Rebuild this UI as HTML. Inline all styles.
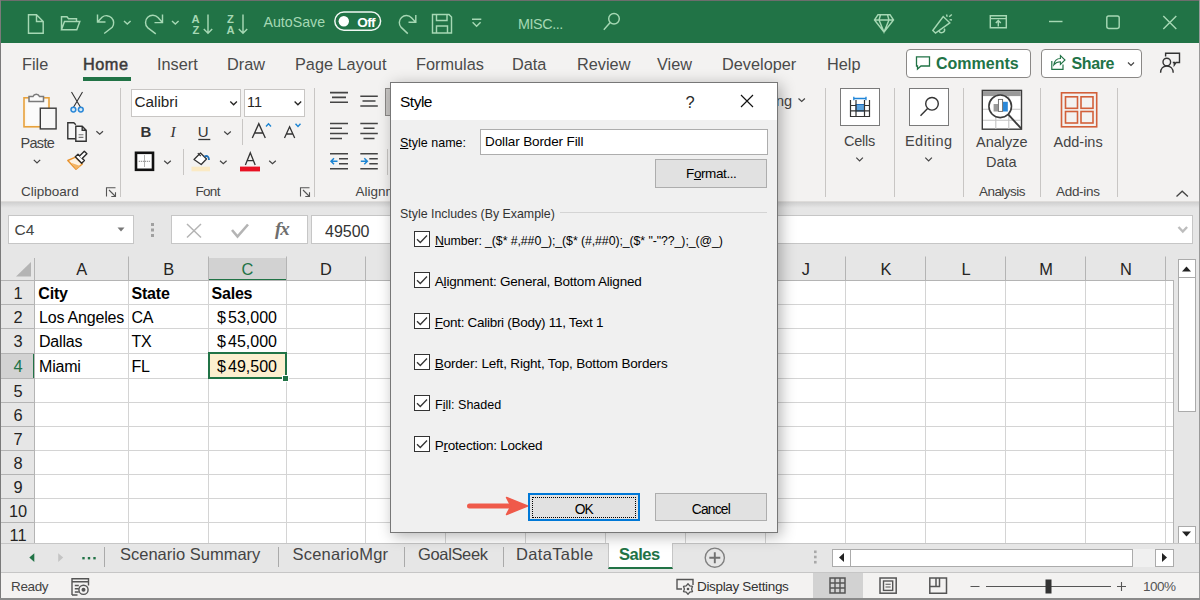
<!DOCTYPE html>
<html><head><meta charset="utf-8">
<style>
*{margin:0;padding:0;box-sizing:border-box}
html,body{width:1200px;height:600px;overflow:hidden;background:#f3f2f1;font-family:"Liberation Sans",sans-serif;color:#252423}
.a{position:absolute}
.t{position:absolute;white-space:nowrap}
svg{position:absolute;overflow:visible}
#title{left:0;top:0;width:1200px;height:43px;background:#217346;border-top:1px solid #6d6d6d}
.tab{position:absolute;top:52.7px;font-size:16.3px;color:#4a4a4a;line-height:22px}
.grp{position:absolute;top:184px;font-size:13.5px;color:#444;line-height:16px}
.sep{position:absolute;width:1px;background:#c8c6c4}
</style></head><body>
<!-- outer border -->
<div class="a" style="left:0;top:0;width:1px;height:600px;background:#7a7a7a;z-index:50"></div>
<div class="a" style="left:1199px;top:0;width:1px;height:600px;background:#9a9a9a;z-index:50"></div>
<div class="a" style="left:0;top:598px;width:1200px;height:2px;background:#8a8a8a;z-index:50"></div>

<!-- TITLE BAR -->
<div id="title" class="a"></div>
<svg class="a" style="left:0;top:0" width="1200" height="43" viewBox="0 0 1200 43">
<g fill="none" stroke="#a6d8b4" stroke-width="1.45" stroke-linejoin="miter">
<!-- new -->
<path d="M28.5 14.8 H36.5 L43.2 21.5 V33.2 H28.5 Z M36.5 14.8 V21.5 H43.2"/>
<!-- open -->
<path d="M61.5 29.8 V16.8 H67 L68.5 18.8 H76.5 V21.5 M61.5 29.8 L64.5 21.5 H79.8 L76.8 29.8 Z"/>
<!-- undo -->
<path d="M97.5 14.5 V22 H105.5 M97.8 21.8 L102 17.2 A7.2 7.2 0 0 1 112.2 27.2 L104.2 33.5"/>
<path d="M124 21 L127.3 24 L130.6 21"/>
<!-- redo -->
<path d="M162.5 14.5 V22.6 H154.5 M162.2 22.3 L158 17.5 A7.2 7.2 0 0 0 147.6 27.6 L155.8 33.8"/>
<path d="M172 21 L175.3 24 L178.6 21"/>
<!-- sort arrows -->
<path d="M208 14.5 V33.2 M203.8 29 L208 33.2 L212.2 29"/>
<path d="M243 14.5 V33.2 M238.8 29 L243 33.2 L247.2 29"/>
<!-- repeat -->
<path d="M415.8 15 V22.2 H408.5 M415.5 22 L411.5 17.8 A6.8 6.8 0 0 0 401.2 27.4 L407.8 33.6"/>
<!-- save -->
<path d="M432.5 14.5 H449 L451.5 17 V33 H432.5 Z M436.5 14.5 V20.5 H447 V14.5 M436.5 33 V26 H447.5 V33"/>
<!-- customize -->
<path d="M472 19.3 H481.3 M472.6 22.3 L476.6 26.3 L480.6 22.3"/>
<!-- search -->
<circle cx="614" cy="18.8" r="5.3"/>
<path d="M610.2 22.6 L603.8 29.8"/>
<!-- diamond -->
<path d="M878 14.7 H890 L893.5 20 L884 32 L874.5 20 Z M874.5 20 H893.5 M880.5 14.7 L879 20 L884 32 L889 20 L887.5 14.7"/>
<!-- megaphone -->
<path d="M932.8 30.5 L943.2 16.5 L949.8 22.8 L935.5 33 Z M939 31 A2.8 2.8 0 0 0 944.3 28.6 M946.5 14.5 L947.2 16.8 M949.2 16.8 L951.8 14.5 M949.6 19.6 L952 20"/>
<!-- ribbon display -->
<path d="M990.3 15.8 H1006.3 V27.8 H990.3 Z M990.3 18.6 H1006.3 M998.3 26.5 V20.5 M995.8 23 L998.3 20.5 L1000.8 23"/>
<!-- min -->
<path d="M1049 21.5 H1062.5"/>
<!-- max -->
<rect x="1106.8" y="16" width="12.4" height="12.4" rx="1.8"/>
<!-- close -->
<path d="M1163.3 16 L1176.3 29 M1176.3 16 L1163.3 29"/>
</g>
<g font-family="Liberation Sans" fill="#a6d8b4" font-size="11.2" >
<text x="191.6" y="22.6" font-weight="bold">A</text><text x="192.4" y="33.8" font-weight="bold">Z</text>
<text x="227" y="22.6" font-weight="bold">Z</text><text x="226.5" y="33.8" font-weight="bold">A</text>
</g>
<text x="263.5" y="26.9" font-family="Liberation Sans" font-size="14.2" fill="#a6d8b4">AutoSave</text>
<rect x="334.8" y="12" width="45.8" height="18.2" rx="9.1" fill="none" stroke="#f0f7f2" stroke-width="1.5"/>
<circle cx="343.8" cy="21.2" r="5.2" fill="#fff"/>
<text x="357.2" y="26.9" font-family="Liberation Sans" font-size="13.6" font-weight="bold" fill="#fff" letter-spacing="-0.6">Off</text>
<text x="518" y="29.2" font-family="Liberation Sans" font-size="14.3" fill="#a6d8b4" letter-spacing="-0.4">MISC...</text>
</svg>


<!-- TABS -->
<div class="tab" style="left:22px">File</div>
<div class="tab" style="left:83px;color:#3b3a39;-webkit-text-stroke:0.5px #3b3a39;letter-spacing:0.5px">Home</div>
<div class="a" style="left:83px;top:77px;width:48px;height:4px;background:#217346"></div>
<div class="tab" style="left:157px">Insert</div>
<div class="tab" style="left:227px">Draw</div>
<div class="tab" style="left:295px">Page Layout</div>
<div class="tab" style="left:416px">Formulas</div>
<div class="tab" style="left:512px">Data</div>
<div class="tab" style="left:577px">Review</div>
<div class="tab" style="left:657px">View</div>
<div class="tab" style="left:722px">Developer</div>
<div class="tab" style="left:827px">Help</div>


<!-- tabs right -->
<div class="a" style="left:906px;top:48.5px;width:125px;height:29px;border:1px solid #8a8886;border-radius:4px;background:#fff"></div>
<div class="t" style="left:936px;top:52.7px;font-size:16px;font-weight:bold;color:#217346;line-height:22px">Comments</div>
<div class="a" style="left:1041px;top:48.5px;width:101px;height:29px;border:1px solid #8a8886;border-radius:4px;background:#fff"></div>
<div class="t" style="left:1071.5px;top:52.7px;font-size:16px;font-weight:bold;color:#217346;line-height:22px;letter-spacing:-0.4px">Share</div>
<svg class="a" style="left:0;top:0" width="1200" height="210" viewBox="0 0 1200 210">
<g fill="none" stroke="#217346" stroke-width="1.3">
<path d="M916.5 56.8 H929.5 V66 H921 L917.5 69 V66 H916.5 Z"/>
<path d="M1051.8 61 V69.3 H1063 V64.4" stroke-width="1.2"/><path d="M1053.8 64.8 C1054.5 60.5 1057 58.5 1060.4 58.5 V55.6 L1065 60 L1060.4 64.5 V61.8 C1057.5 61.8 1055.5 62.8 1053.8 64.8 Z" stroke-width="1.1"/>
</g>
<path d="M1128 62.5 L1131 65.5 L1134 62.5" fill="none" stroke="#444" stroke-width="1.2"/>
<g fill="none" stroke="#333" stroke-width="1.4">
<circle cx="1166.8" cy="62" r="3.8"/>
<path d="M1160.6 72.8 C1160.6 68.5 1163.3 66 1166.8 66 C1170.3 66 1173.2 68.5 1173.2 72.8"/>
<path d="M1165.6 56.5 V53.3 H1179.5 V62.5 H1176 L1174.3 65 V62.5 H1172.8"/>
</g>
</svg>

<!-- RIBBON -->
<!-- separators -->
<div class="sep" style="left:120px;top:88px;height:109px"></div>
<div class="sep" style="left:314px;top:88px;height:109px"></div>
<div class="sep" style="left:825px;top:88px;height:109px"></div>
<div class="sep" style="left:894px;top:88px;height:109px"></div>
<div class="sep" style="left:963px;top:88px;height:109px"></div>
<div class="sep" style="left:1040px;top:88px;height:109px"></div>
<div class="sep" style="left:1117px;top:88px;height:109px"></div>
<div class="sep" style="left:242px;top:119px;height:26px"></div>
<div class="sep" style="left:183px;top:149px;height:26px"></div>
<div class="sep" style="left:387px;top:149px;height:26px"></div>
<!-- inputs -->
<div class="a" style="left:131px;top:88.5px;width:110px;height:28px;background:#fff;border:1px solid #c8c6c4"></div>
<div class="a" style="left:243.5px;top:88.5px;width:61px;height:28px;background:#fff;border:1px solid #c8c6c4"></div>
<div class="t" style="left:134.5px;top:93px;font-size:15.3px;line-height:18px;color:#252423">Calibri</div>
<div class="t" style="left:247px;top:93px;font-size:14.5px;line-height:18px;color:#252423">11</div>
<!-- cells / editing boxes -->
<div class="a" style="left:840px;top:88px;width:40px;height:38px;background:#fff;border:1px solid #7a7a7a"></div>
<div class="a" style="left:909px;top:88px;width:40px;height:38px;background:#fff;border:1px solid #7a7a7a"></div>
<div class="a" style="left:385px;top:88px;width:10px;height:28px;background:#c8c6c4;border:1px solid #8a8886"></div>
<!-- labels -->
<div class="t" style="left:20.5px;top:134px;font-size:14.5px;line-height:18px;color:#444;letter-spacing:-0.7px">Paste</div>
<div class="grp" style="left:21px">Clipboard</div>
<div class="grp" style="left:195.5px;letter-spacing:-0.7px">Font</div>
<div class="grp" style="left:355.5px">Alignm</div>
<div class="grp" style="left:979px;letter-spacing:-0.55px">Analysis</div>
<div class="grp" style="left:1056px;letter-spacing:-0.3px">Add-ins</div>
<div class="t" style="left:844px;top:132px;font-size:14.5px;line-height:18px;color:#444;letter-spacing:-0.25px">Cells</div>
<div class="t" style="left:905px;top:132px;font-size:14.5px;line-height:18px;color:#444;letter-spacing:0.45px">Editing</div>
<div class="t" style="left:976px;top:133px;font-size:14.5px;line-height:18px;color:#444">Analyze</div>
<div class="t" style="left:986px;top:152.5px;font-size:14.5px;line-height:18px;color:#444">Data</div>
<div class="t" style="left:1053.5px;top:133px;font-size:14.5px;line-height:18px;color:#444">Add-ins</div>
<div class="t" style="left:776px;top:92px;font-size:14.5px;line-height:18px;color:#444">ng</div>

<svg class="a" style="left:0;top:0" width="1200" height="210" viewBox="0 0 1200 210">
<!-- paste -->
<rect x="24" y="97.8" width="25" height="29" fill="#fdf6ea" stroke="#e8a23c" stroke-width="1.6"/>
<rect x="26.5" y="100.5" width="20" height="24" fill="#fbfbfb" stroke="none"/>
<path d="M29 101.5 V96.5 H33 A3.5 3.5 0 0 1 39.5 96.5 H43.5 V101.5 Z" fill="#fafafa" stroke="#7a7a7a" stroke-width="1.5"/>
<rect x="40.3" y="108.2" width="15.8" height="20.7" fill="#f7f7f7" stroke="#3b3b3b" stroke-width="1.4"/>
<g fill="none" stroke="#444" stroke-width="1.2">
<path d="M33.8 159.8 L37 163 L40.2 159.8"/>
<path d="M96.4 131.2 L99.7 134.2 L103 131.2"/>
<path d="M224.2 131.5 L227.5 134.5 L230.8 131.5"/>
<path d="M164.2 160.8 L167.5 163.8 L170.8 160.8"/>
<path d="M220 160.8 L223.3 163.8 L226.6 160.8"/>
<path d="M269.2 160.8 L272.5 163.8 L275.8 160.8"/>
<path d="M230.3 101.5 L233.6 104.8 L236.9 101.5" stroke="#252423" stroke-width="1.3"/>
<path d="M294.6 101.5 L297.9 104.8 L301.2 101.5" stroke="#252423" stroke-width="1.3"/>
<path d="M856.3 157.6 L859.6 160.9 L862.9 157.6"/>
<path d="M925.3 157.6 L928.6 160.9 L931.9 157.6"/>
<path d="M798.5 98.5 L801.7 101.5 L804.9 98.5"/>
<path d="M1176.5 196.5 L1182.2 191.2 L1187.9 196.5" stroke-width="1.3"/>
</g>
<!-- scissors -->
<g fill="none" stroke="#333" stroke-width="1.1">
<path d="M71.5 92 L80.5 107.3 M82.5 92 L73.5 107.3"/>
</g>
<circle cx="73.4" cy="109.6" r="2.4" fill="#d6ebf8" stroke="#2b88d8" stroke-width="1.5"/>
<circle cx="80.8" cy="109.6" r="2.4" fill="#d6ebf8" stroke="#2b88d8" stroke-width="1.5"/>
<!-- copy -->
<path d="M75.5 138.8 H67.8 V122.8 H73.8 L75.8 124.8" fill="#f6f6f6" stroke="#333" stroke-width="1.4"/>
<path d="M75.8 141.2 V126.2 H82.2 L86.2 130.2 V141.2 Z M82.2 126.2 V130.2 H86.2" fill="#f6f6f6" stroke="#333" stroke-width="1.4"/>
<path d="M78.6 134.8 H83.4 M78.6 137.4 H83.4" stroke="#777" stroke-width="1.1"/>
<!-- format painter -->
<path d="M67.8 160.5 L75.5 157.2 L82.3 164 L76 169.3 Z" fill="#fdf3e4" stroke="#e8912a" stroke-width="1.4" stroke-linejoin="round"/>
<path d="M71 162.8 L80.3 166 L76 169.3 Z" fill="#f3b565"/>
<path d="M75.3 156.8 L78 154.2 L84.4 160.6 L81.7 163.2 Z" fill="#fff" stroke="#2b2b2b" stroke-width="1.4" stroke-linejoin="round"/>
<path d="M79.3 156.2 L84.3 151.2 L86.9 153.8 L81.9 158.8" fill="#fff" stroke="#2b2b2b" stroke-width="1.4" stroke-linejoin="round"/>
<!-- launchers -->
<g fill="none" stroke="#555" stroke-width="1.1">
<path d="M106.5 196.5 V187.8 H115.5 M109 190 L115.5 196.5 M111.3 196.5 H115.5 V192.3"/>
<path d="M300.5 196.5 V187.8 H309.5 M303 190 L309.5 196.5 M305.3 196.5 H309.5 V192.3"/>
</g>
<!-- B I U -->
<text x="140.5" y="136.5" font-family="Liberation Sans" font-weight="bold" font-size="15" fill="#333">B</text>
<text x="170.5" y="136.5" font-family="Liberation Serif" font-style="italic" font-size="15.5" fill="#333">I</text>
<text x="197.8" y="136.5" font-family="Liberation Sans" font-size="15" fill="#333">U</text>
<path d="M198.3 139.5 H210.3" stroke="#333" stroke-width="1.3"/>
<path d="M252.3 138 L258.8 123.6 L265.3 138 M254.6 133 H263" fill="none" stroke="#333" stroke-width="1.35"/>
<path d="M266 126.5 L268.5 123.8 L271 126.5" fill="none" stroke="#1d85d3" stroke-width="1.4"/>
<path d="M284.5 138 L289.6 126.8 L294.7 138 M286.4 134 H292.8" fill="none" stroke="#333" stroke-width="1.3"/>
<path d="M295.5 123.8 L298 126.5 L300.5 123.8" fill="none" stroke="#1d85d3" stroke-width="1.4"/>
<!-- borders -->
<rect x="136" y="152.8" width="17" height="17" fill="#fff" stroke="#111" stroke-width="2.6"/>
<path d="M144.5 155.5 V167.5 M138.8 161.3 H150.2" stroke="#666" stroke-width="1" stroke-dasharray="1 1"/>
<!-- fill -->
<rect x="191.5" y="166.7" width="18.5" height="4.6" fill="#fbeac4"/>
<path d="M194 159.5 L200.5 153 L206.5 159 L201.2 164.5 Z" fill="#fff" stroke="#333" stroke-width="1.3" stroke-linejoin="round"/>
<path d="M197.8 153.2 L200.8 156.2" stroke="#333" stroke-width="1.2"/>
<path d="M204.5 156.5 C207.5 155 209 157 209 160" fill="none" stroke="#1d6fb8" stroke-width="1.8"/>
<!-- font color -->
<path d="M245.4 165 L250.3 152.8 L255.2 165 M247.2 160.6 H253.4" fill="none" stroke="#333" stroke-width="1.3"/>
<rect x="240" y="166.6" width="20" height="4.8" fill="#e81123"/>
<!-- alignment icons -->
<g stroke="#444" stroke-width="1.6">
<path d="M330 92.6 H348 M332 97.4 H346 M330 102.3 H348"/>
<path d="M360.3 96.3 H377.8 M362.5 101 H375.5 M360.3 106 H377.8"/>
<path d="M330 123.5 H348 M330 128.2 H342 M330 133.5 H348 M330 138.5 H342"/>
<path d="M360.3 123.5 H377.8 M363.5 128.2 H374.5 M360.3 133.5 H377.8 M363.5 138.5 H374.5"/>
<path d="M330 153.8 H348 M339 158.8 H348 M339 163.8 H348 M330 168.8 H348"/>
<path d="M360.3 153.8 H377.8 M369.3 158.8 H377.8 M369.3 163.8 H377.8 M360.3 168.8 H377.8"/>
</g>
<g stroke="#1d85d3" stroke-width="1.5" fill="none">
<path d="M331 161.3 H337.5 M334 158.3 L331 161.3 L334 164.3"/>
<path d="M360.8 161.3 H367.3 M364.3 158.3 L367.3 161.3 L364.3 164.3"/>
</g>
<!-- cells icon -->
<rect x="856" y="104.5" width="8.5" height="6.5" fill="#5ba3e0" stroke="#1f6fc0" stroke-width="1"/>
<path d="M850.5 100 V116.5 H869.5 V100 M850.5 105.5 H856 M864.5 105.5 H869.5 M850.5 110.8 H856 M864.5 110.8 H869.5 M856 100 V116.5 M864.5 100 V116.5 M856 110.8 H864.5" fill="none" stroke="#333" stroke-width="1.2"/>
<path d="M853.5 98.5 H866.2 M853.8 96.8 V100.2 M866 96.8 V100.2" stroke="#1f85d8" stroke-width="1.3"/>
<!-- editing search -->
<circle cx="932" cy="103.8" r="6.3" fill="none" stroke="#333" stroke-width="1.4"/>
<path d="M927.6 108.4 L920.5 115.8" stroke="#333" stroke-width="1.4"/>
<!-- analyze data -->
<rect x="982.3" y="90.4" width="39.2" height="38.8" fill="#fff" stroke="#3b3b3b" stroke-width="1.4"/>
<rect x="983" y="91.1" width="37.8" height="5" fill="#9a9a9a"/>
<path d="M983 109.2 H1021 M983 120.2 H1021 M995.8 96 V129 M1008.8 96 V129" stroke="#c4c4c4" stroke-width="1.1"/>
<circle cx="1000.2" cy="106.3" r="11.3" fill="#fff" stroke="#3b3b3b" stroke-width="1.6"/>
<path d="M1008.2 114.3 L1021.3 128.7" stroke="#3b3b3b" stroke-width="1.9"/>
<rect x="993.6" y="104" width="4.4" height="7.5" fill="#9a9a9a"/>
<rect x="998.4" y="99.4" width="4.2" height="12" fill="#fff" stroke="#666" stroke-width="0.9"/>
<rect x="1003" y="101.8" width="4.8" height="9.7" fill="#2b88d8"/>
<!-- add-ins -->
<g fill="none" stroke="#d2603a" stroke-width="1.6">
<rect x="1061.5" y="92.8" width="35.2" height="34"/>
<rect x="1065.5" y="96.8" width="12" height="11.5"/>
<rect x="1081" y="96.8" width="12" height="11.5"/>
<rect x="1065.5" y="111.5" width="12" height="11.5"/>
<rect x="1081" y="111.5" width="12" height="11.5"/>
</g>
</svg>

<div class="a" style="left:0;top:201px;width:1200px;height:2px;background:#dedcda"></div>

<!-- FORMULA AREA -->
<div class="a" style="left:0;top:202px;width:1200px;height:341px;background:#e6e6e6"></div>
<div class="a" style="left:0;top:202px;width:1200px;height:6px;background:linear-gradient(#cfcfcf,#e6e6e6)"></div>
<div class="a" style="left:7.5px;top:214.8px;width:126px;height:29.7px;background:#fff;border:1px solid #c6c6c6"></div>
<div class="t" style="left:14.5px;top:220.5px;font-size:15.5px;line-height:18px;color:#444">C4</div>

<div class="a" style="left:171.3px;top:215.3px;width:136.5px;height:29px;background:#fff;border:1px solid #c6c6c6"></div>
<div class="t" style="left:275px;top:218px;font-size:19px;line-height:22px;color:#6e6e6e;font-family:'Liberation Serif';font-style:italic;font-weight:bold;letter-spacing:-1px">fx</div>
<div class="a" style="left:311px;top:215.3px;width:882px;height:29px;background:#fff;border:1px solid #c6c6c6"></div>
<div class="t" style="left:325px;top:222.5px;font-size:16px;line-height:18px;color:#333">49500</div>
<svg class="a" style="left:0;top:200px" width="1200" height="60" viewBox="0 200 1200 60">
<path d="M117.5 227.5 H124.5 L121 231.5 Z" fill="#777"/>
<g fill="#a0a0a0"><rect x="151" y="223" width="3" height="3"/><rect x="151" y="228.5" width="3" height="3"/><rect x="151" y="234" width="3" height="3"/></g>
<path d="M187 224 L201 237.5 M201 224 L187 237.5" stroke="#b4b4b4" stroke-width="1.5"/>
<path d="M232 230 L237.5 236.5 L248 224.5" fill="none" stroke="#b4b4b4" stroke-width="2.6"/>
<path d="M1178.5 227 L1182.8 231.5 L1187.1 227" fill="none" stroke="#bdbdbd" stroke-width="2.4"/>
</svg>

<!-- GRID -->
<div class="a" style="left:1px;top:257.5px;width:1172px;height:22.5px;background:#e6e6e6"></div>
<div class="a" style="left:208px;top:257.5px;width:78.5px;height:23px;background:#d2d2d2;border-bottom:2px solid #217346"></div>
<div class="a" style="left:1px;top:280px;width:33px;height:263px;background:#e6e6e6"></div>
<div class="a" style="left:1px;top:353px;width:34px;height:25px;background:#d2d2d2;border-right:2px solid #217346"></div>
<div class="a" style="left:35px;top:280.5px;width:1138.5px;height:263px;background:#fff"></div>
<svg class="a" style="left:0;top:0" width="1200" height="600" viewBox="0 0 1200 600">
<path d="M16 276.5 H31 V262 Z" fill="#b4b4b4"/>
<g stroke="#d4d4d4" stroke-width="1">
<path d="M35 304.5 H1173.5"/>
<path d="M35 328.5 H1173.5"/>
<path d="M35 353.5 H1173.5"/>
<path d="M35 378.5 H1173.5"/>
<path d="M35 402.5 H1173.5"/>
<path d="M35 426.5 H1173.5"/>
<path d="M35 450.5 H1173.5"/>
<path d="M35 474.5 H1173.5"/>
<path d="M35 498.5 H1173.5"/>
<path d="M35 522.5 H1173.5"/>
<path d="M128.5 280 V543"/>
<path d="M208.5 280 V543"/>
<path d="M286.5 280 V543"/>
<path d="M365.5 280 V543"/>
<path d="M445.5 280 V543"/>
<path d="M525.5 280 V543"/>
<path d="M605.5 280 V543"/>
<path d="M685.5 280 V543"/>
<path d="M765.5 280 V543"/>
<path d="M845.5 280 V543"/>
<path d="M925.5 280 V543"/>
<path d="M1005.5 280 V543"/>
<path d="M1085.5 280 V543"/>
<path d="M1165.5 280 V543"/>
</g>
<g stroke="#b4b4b4" stroke-width="1">
<path d="M1 280.5 H1173.5"/>
<path d="M34.5 258 V543"/>
<path d="M128.5 256.5 V280"/>
<path d="M208.5 256.5 V280"/>
<path d="M286.5 256.5 V280"/>
<path d="M365.5 256.5 V280"/>
<path d="M445.5 256.5 V280"/>
<path d="M525.5 256.5 V280"/>
<path d="M605.5 256.5 V280"/>
<path d="M685.5 256.5 V280"/>
<path d="M765.5 256.5 V280"/>
<path d="M845.5 256.5 V280"/>
<path d="M925.5 256.5 V280"/>
<path d="M1005.5 256.5 V280"/>
<path d="M1085.5 256.5 V280"/>
<path d="M1165.5 256.5 V280"/>
<path d="M1 304.5 H34"/>
<path d="M1 328.5 H34"/>
<path d="M1 353.5 H34"/>
<path d="M1 378.5 H34"/>
<path d="M1 402.5 H34"/>
<path d="M1 426.5 H34"/>
<path d="M1 450.5 H34"/>
<path d="M1 474.5 H34"/>
<path d="M1 498.5 H34"/>
<path d="M1 522.5 H34"/>
<path d="M1173.5 280 V543"/>
</g>
</svg>
<div class="t" style="left:34.5px;width:94.5px;text-align:center;top:259px;font-size:16.4px;line-height:20px;color:#252423">A</div>
<div class="t" style="left:129.0px;width:79.5px;text-align:center;top:259px;font-size:16.4px;line-height:20px;color:#252423">B</div>
<div class="t" style="left:208.5px;width:78px;text-align:center;top:259px;font-size:16.4px;line-height:20px;color:#217346">C</div>
<div class="t" style="left:286.5px;width:79px;text-align:center;top:259px;font-size:16.4px;line-height:20px;color:#252423">D</div>
<div class="t" style="left:765.5px;width:80.5px;text-align:center;top:259px;font-size:16.4px;line-height:20px;color:#252423">J</div>
<div class="t" style="left:846.0px;width:79.79999999999995px;text-align:center;top:259px;font-size:16.4px;line-height:20px;color:#252423">K</div>
<div class="t" style="left:925.8px;width:80.5px;text-align:center;top:259px;font-size:16.4px;line-height:20px;color:#252423">L</div>
<div class="t" style="left:1006.3px;width:79.79999999999995px;text-align:center;top:259px;font-size:16.4px;line-height:20px;color:#252423">M</div>
<div class="t" style="left:1086.1px;width:79.90000000000009px;text-align:center;top:259px;font-size:16.4px;line-height:20px;color:#252423">N</div>
<div class="t" style="left:1px;width:34px;text-align:center;top:283px;font-size:16.4px;line-height:20px;color:#252423">1</div>
<div class="t" style="left:1px;width:34px;text-align:center;top:307px;font-size:16.4px;line-height:20px;color:#252423">2</div>
<div class="t" style="left:1px;width:34px;text-align:center;top:331px;font-size:16.4px;line-height:20px;color:#252423">3</div>
<div class="t" style="left:1px;width:34px;text-align:center;top:356px;font-size:16.4px;line-height:20px;color:#217346">4</div>
<div class="t" style="left:1px;width:34px;text-align:center;top:381px;font-size:16.4px;line-height:20px;color:#252423">5</div>
<div class="t" style="left:1px;width:34px;text-align:center;top:405px;font-size:16.4px;line-height:20px;color:#252423">6</div>
<div class="t" style="left:1px;width:34px;text-align:center;top:429px;font-size:16.4px;line-height:20px;color:#252423">7</div>
<div class="t" style="left:1px;width:34px;text-align:center;top:453px;font-size:16.4px;line-height:20px;color:#252423">8</div>
<div class="t" style="left:1px;width:34px;text-align:center;top:477px;font-size:16.4px;line-height:20px;color:#252423">9</div>
<div class="t" style="left:1px;width:34px;text-align:center;top:501px;font-size:16.4px;line-height:20px;color:#252423">10</div>
<div class="t" style="left:1px;width:34px;text-align:center;top:525px;font-size:16.4px;line-height:20px;color:#252423">11</div>
<div class="t" style="left:38.3px;top:284.3px;font-size:16px;line-height:20px;font-weight:bold;color:#000;letter-spacing:-0.2px">City</div>
<div class="t" style="left:131.5px;top:284.3px;font-size:16px;line-height:20px;font-weight:bold;color:#000;letter-spacing:-0.2px">State</div>
<div class="t" style="left:211.5px;top:284.3px;font-size:16px;line-height:20px;font-weight:bold;color:#000;letter-spacing:-0.2px">Sales</div>
<div class="t" style="left:39px;top:308.3px;font-size:16px;line-height:20px;font-weight:normal;color:#000;letter-spacing:-0.2px">Los Angeles</div>
<div class="t" style="left:131.5px;top:308.3px;font-size:16px;line-height:20px;font-weight:normal;color:#000;letter-spacing:-0.2px">CA</div>
<div class="t" style="left:39px;top:332.3px;font-size:16px;line-height:20px;font-weight:normal;color:#000;letter-spacing:-0.2px">Dallas</div>
<div class="t" style="left:131.5px;top:332.3px;font-size:16px;line-height:20px;font-weight:normal;color:#000;letter-spacing:-0.2px">TX</div>
<div class="t" style="left:39px;top:357.3px;font-size:16px;line-height:20px;font-weight:normal;color:#000;letter-spacing:-0.2px">Miami</div>
<div class="t" style="left:131.5px;top:357.3px;font-size:16px;line-height:20px;font-weight:normal;color:#000;letter-spacing:-0.2px">FL</div>
<div class="a" style="left:207.5px;top:352.3px;width:79px;height:26.7px;background:#fcefcf;border:2.3px solid #217346"></div>
<div class="a" style="left:282px;top:375px;width:7px;height:7px;background:#217346;border:1px solid #fff"></div>
<div class="t" style="left:217px;top:308.3px;font-size:16px;line-height:20px;color:#000">$</div>
<div class="t" style="left:200px;width:77px;text-align:right;top:308.3px;font-size:16px;line-height:20px;color:#000">53,000</div>
<div class="t" style="left:217px;top:332.3px;font-size:16px;line-height:20px;color:#000">$</div>
<div class="t" style="left:200px;width:77px;text-align:right;top:332.3px;font-size:16px;line-height:20px;color:#000">45,000</div>
<div class="t" style="left:217px;top:357.3px;font-size:16px;line-height:20px;color:#000">$</div>
<div class="t" style="left:200px;width:77px;text-align:right;top:357.3px;font-size:16px;line-height:20px;color:#000">49,500</div>
<!-- v scrollbar -->
<div class="a" style="left:1174px;top:257px;width:25px;height:286px;background:#e6e6e6"></div>
<div class="a" style="left:1177.5px;top:259px;width:18px;height:152.5px;background:#fff;border:1px solid #ababab"></div>
<div class="a" style="left:1177.5px;top:259px;width:18px;height:18.5px;background:#fff;border:1px solid #ababab"></div>
<div class="a" style="left:1177.5px;top:525.5px;width:18px;height:18px;background:#fff;border:1px solid #ababab"></div>
<svg class="a" style="left:0;top:0" width="1200" height="600" viewBox="0 0 1200 600">
<path d="M1182 271.5 H1191 L1186.5 266.5 Z" fill="#222"/>
<path d="M1182 531.5 H1191 L1186.5 536.5 Z" fill="#222"/>
</svg>

<!-- SHEET TABS -->
<div class="a" style="left:0;top:543px;width:1200px;height:29px;background:#e6e6e6;border-top:1px solid #c6c6c6"></div>
<div class="a" style="left:608px;top:543px;width:64.5px;height:26px;background:#fff;border-left:1px solid #c6c6c6;border-right:1px solid #c6c6c6;border-bottom:2px solid #217346"></div>
<svg class="a" style="left:0;top:0" width="1200" height="600" viewBox="0 0 1200 600">
<path d="M34.3 553.2 V562 L29.3 557.6 Z" fill="#217346"/>
<path d="M58.2 553.2 V562 L63.2 557.6 Z" fill="#c4c4c4"/>
<g fill="#217346"><rect x="82.3" y="557" width="2.4" height="2.4"/><rect x="87.8" y="557" width="2.4" height="2.4"/><rect x="93.3" y="557" width="2.4" height="2.4"/></g>
<g stroke="#aaa" stroke-width="1"><path d="M104.5 547 V567 M278.5 547 V567 M404.5 547 V567 M503.5 547 V567"/></g>
<circle cx="714.8" cy="557.7" r="9.6" fill="none" stroke="#808080" stroke-width="1.4"/>
<path d="M714.8 552.2 V563.2 M709.3 557.7 H720.3" stroke="#707070" stroke-width="1.9"/>
<g fill="#a8a8a8"><rect x="814" y="550.5" width="2.6" height="2.6"/><rect x="814" y="555.7" width="2.6" height="2.6"/><rect x="814" y="560.9" width="2.6" height="2.6"/></g>
</svg>
<div class="t" style="left:120px;top:543px;font-size:16.5px;line-height:22px;color:#444">Scenario Summary</div>
<div class="t" style="left:292.5px;top:543px;font-size:16.5px;line-height:22px;color:#444;letter-spacing:0.2px">ScenarioMgr</div>
<div class="t" style="left:418px;top:543px;font-size:16.5px;line-height:22px;color:#444;letter-spacing:-0.35px">GoalSeek</div>
<div class="t" style="left:516px;top:543px;font-size:16.5px;line-height:22px;color:#444;letter-spacing:0.35px">DataTable</div>
<div class="t" style="left:619px;top:543px;font-size:16.5px;line-height:22px;color:#217346;font-weight:bold;letter-spacing:-0.5px">Sales</div>
<!-- h scrollbar -->
<div class="a" style="left:832px;top:548.5px;width:342px;height:18px;background:#f0f0f0"></div>
<div class="a" style="left:832px;top:548.5px;width:301px;height:18px;background:#fff;border:1px solid #ababab"></div>
<div class="a" style="left:832px;top:548.5px;width:18.5px;height:18px;background:#fff;border:1px solid #ababab"></div>
<div class="a" style="left:1155px;top:548.5px;width:18.5px;height:18px;background:#fff;border:1px solid #ababab"></div>
<svg class="a" style="left:0;top:0" width="1200" height="600" viewBox="0 0 1200 600">
<path d="M844 553 V562 L839 557.5 Z" fill="#222"/>
<path d="M1162 553 V562 L1167 557.5 Z" fill="#222"/>
</svg>

<!-- STATUS -->
<div class="a" style="left:0;top:571.5px;width:1200px;height:1px;background:#c6c6c6"></div>
<div class="a" style="left:813px;top:572.5px;width:50px;height:26px;background:#d2d2d2"></div>
<div class="t" style="left:11px;top:578px;font-size:13.5px;line-height:18px;color:#444;letter-spacing:-0.35px">Ready</div>
<div class="t" style="left:697px;top:578px;font-size:13.5px;line-height:18px;color:#333;letter-spacing:-0.33px">Display Settings</div>
<div class="t" style="left:1143px;top:578px;font-size:13.5px;line-height:18px;color:#555;letter-spacing:-0.5px">100%</div>
<svg class="a" style="left:0;top:0" width="1200" height="600" viewBox="0 0 1200 600">
<g fill="none" stroke="#555" stroke-width="1.4">
<path d="M72 595 V578.8 H88.5 V585.5 M72 581.8 H88.5 M74.8 585.5 H78.8 M74.8 588.8 H78.8 M74.8 592 H78.8 M72 595 H77.5"/>
</g>
<circle cx="83.5" cy="589.8" r="4.6" fill="#f3f2f1" stroke="#555" stroke-width="1.4"/>
<circle cx="83.5" cy="589.8" r="2" fill="#555"/>
<g fill="none" stroke="#555" stroke-width="1.4">
<path d="M682 589 H677 V579.5 H693 V585"/>
<path d="M688.00 583.80 L689.80 585.88 L692.50 586.40 L691.60 589.00 L692.50 591.60 L689.80 592.12 L688.00 594.20 L686.20 592.12 L683.50 591.60 L684.40 589.00 L683.50 586.40 L686.20 585.88 Z" stroke-linejoin="round" stroke-width="1.3"/>
</g>
<circle cx="688" cy="589" r="1.3" fill="#555"/>
<g fill="none" stroke="#555" stroke-width="1.3">
<rect x="830" y="578" width="15" height="15" stroke-width="1.5"/>
<path d="M835 578 V593 M840 578 V593 M830 583 H845 M830 588 H845" stroke-width="1.4"/>
<rect x="880" y="578" width="16.2" height="15.2" stroke-width="1.5"/>
<rect x="883.5" y="581" width="9.2" height="9.4" stroke-width="1.4"/>
<path d="M885.5 584.3 H890.7 M885.5 587 H890.7" stroke-width="1.1"/>
<path d="M929.8 593.2 V578 H946.5 V593.2 Z M930 586.5 H939.5 V578 M936 578 V586.5" stroke-width="1.5"/>
</g>
<path d="M970.5 586.5 H979.5 M986 586.5 H1111 M1117 586.5 H1126 M1121.5 582 V591" stroke="#555" stroke-width="1.1"/>
<rect x="1045.5" y="579.5" width="6" height="14" fill="#333"/>
</svg>

<!-- DIALOG -->
<div class="a" style="left:390px;top:82px;width:388px;height:451px;background:#f0f0f0;border:1px solid #777;box-shadow:3px 3px 14px rgba(0,0,0,0.3)"></div>
<div class="a" style="left:391px;top:83px;width:386px;height:37px;background:#fff"></div>
<div class="t" style="left:400px;top:92px;font-size:15.5px;line-height:20px;color:#000;letter-spacing:-0.5px">Style</div>
<div class="t" style="left:685.5px;top:91.5px;font-size:16.5px;line-height:20px;color:#2a2a2a">?</div>
<svg class="a" style="left:0;top:0" width="1200" height="600" viewBox="0 0 1200 600">
<path d="M741 95 L753 107 M753 95 L741 107" stroke="#111" stroke-width="1.15"/>
<path d="M560 212.5 H767" stroke="#d4d4d4" stroke-width="1"/>
</svg>
<div class="t" style="left:400px;top:134px;font-size:13.5px;line-height:18px;color:#000;letter-spacing:0px;transform:scaleX(0.925);transform-origin:0 0"><u>S</u>tyle name:</div>
<div class="a" style="left:480px;top:129px;width:287.5px;height:25.5px;background:#fff;border:1px solid #adadad"></div>
<div class="t" style="left:485px;top:133px;font-size:13.5px;line-height:18px;color:#000;letter-spacing:-0.12px">Dollar Border Fill</div>
<div class="a" style="left:655px;top:159px;width:112px;height:28.5px;background:#e1e1e1;border:1px solid #adadad"></div>
<div class="t" style="left:655.5px;width:111.5px;text-align:center;top:165px;font-size:13.5px;line-height:18px;color:#000;letter-spacing:-0.4px">F<u>o</u>rmat...</div>
<div class="t" style="left:400px;top:205px;font-size:13.5px;line-height:18px;color:#333;letter-spacing:0px;transform:scaleX(0.917);transform-origin:0 0">Style Includes (By Example)</div>
<div class="a" style="left:414px;top:231px;width:16px;height:16px;background:#fff;border:1px solid #333"></div>
<svg class="a" style="left:414px;top:231px" width="16" height="16" viewBox="0 0 16 16"><path d="M3 8.2 L6.3 11.5 L13 4.5" fill="none" stroke="#333" stroke-width="1.3"/></svg>
<div class="t" style="left:434.8px;top:231.5px;font-size:13.5px;line-height:18px;color:#000;letter-spacing:-0.1px;transform:scaleX(0.915);transform-origin:0 0"><u>N</u>umber: _($* #,##0_);_($* (#,##0);_($* "-"??_);_(@_)</div>
<div class="a" style="left:414px;top:272px;width:16px;height:16px;background:#fff;border:1px solid #333"></div>
<svg class="a" style="left:414px;top:272px" width="16" height="16" viewBox="0 0 16 16"><path d="M3 8.2 L6.3 11.5 L13 4.5" fill="none" stroke="#333" stroke-width="1.3"/></svg>
<div class="t" style="left:434.8px;top:272.5px;font-size:13.5px;line-height:18px;color:#000;letter-spacing:-0.21px">A<u>l</u>ignment: General, Bottom Aligned</div>
<div class="a" style="left:414px;top:313px;width:16px;height:16px;background:#fff;border:1px solid #333"></div>
<svg class="a" style="left:414px;top:313px" width="16" height="16" viewBox="0 0 16 16"><path d="M3 8.2 L6.3 11.5 L13 4.5" fill="none" stroke="#333" stroke-width="1.3"/></svg>
<div class="t" style="left:434.8px;top:313.5px;font-size:13.5px;line-height:18px;color:#000;letter-spacing:-0.29px"><u>F</u>ont: Calibri (Body) 11, Text 1</div>
<div class="a" style="left:414px;top:354px;width:16px;height:16px;background:#fff;border:1px solid #333"></div>
<svg class="a" style="left:414px;top:354px" width="16" height="16" viewBox="0 0 16 16"><path d="M3 8.2 L6.3 11.5 L13 4.5" fill="none" stroke="#333" stroke-width="1.3"/></svg>
<div class="t" style="left:434.8px;top:354.5px;font-size:13.5px;line-height:18px;color:#000;letter-spacing:-0.18px"><u>B</u>order: Left, Right, Top, Bottom Borders</div>
<div class="a" style="left:414px;top:395px;width:16px;height:16px;background:#fff;border:1px solid #333"></div>
<svg class="a" style="left:414px;top:395px" width="16" height="16" viewBox="0 0 16 16"><path d="M3 8.2 L6.3 11.5 L13 4.5" fill="none" stroke="#333" stroke-width="1.3"/></svg>
<div class="t" style="left:434.8px;top:395.5px;font-size:13.5px;line-height:18px;color:#000;letter-spacing:0px;transform:scaleX(0.93);transform-origin:0 0">F<u>i</u>ll: Shaded</div>
<div class="a" style="left:414px;top:436px;width:16px;height:16px;background:#fff;border:1px solid #333"></div>
<svg class="a" style="left:414px;top:436px" width="16" height="16" viewBox="0 0 16 16"><path d="M3 8.2 L6.3 11.5 L13 4.5" fill="none" stroke="#333" stroke-width="1.3"/></svg>
<div class="t" style="left:434.8px;top:436.5px;font-size:13.5px;line-height:18px;color:#000;letter-spacing:-0.24px">P<u>r</u>otection: Locked</div>

<div class="a" style="left:527.7px;top:492.8px;width:112px;height:28.7px;background:#e1e1e1;border:2px solid #0078d7"></div>
<div class="a" style="left:531.5px;top:496.5px;width:104.5px;height:21.5px;border:1px dotted #000"></div>
<div class="t" style="left:527.7px;width:112px;text-align:center;top:501px;font-size:13.8px;line-height:18px;color:#000;letter-spacing:-1px">OK</div>
<div class="a" style="left:655px;top:492.8px;width:111.8px;height:28.7px;background:#e1e1e1;border:1px solid #adadad"></div>
<div class="t" style="left:655px;width:111.8px;text-align:center;top:501px;font-size:13.8px;line-height:18px;color:#000;letter-spacing:-0.8px">Cancel</div>
<svg class="a" style="left:0;top:0" width="1200" height="600" viewBox="0 0 1200 600">
<path d="M469.5 506 H512" stroke="#ef5a4a" stroke-width="5" stroke-linecap="round"/>
<path d="M527.5 506 L506.5 497.5 L511 506 L506.5 514.5 Z" fill="#ef5a4a" stroke="#ef5a4a" stroke-width="1.5" stroke-linejoin="round"/>
</svg>
</body></html>
